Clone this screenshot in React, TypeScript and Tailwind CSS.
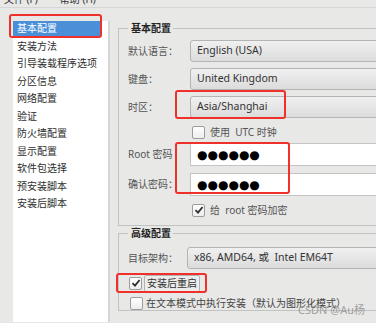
import React from "react";

const menuItems = [
  "基本配置",
  "安装方法",
  "引导装载程序选项",
  "分区信息",
  "网络配置",
  "验证",
  "防火墙配置",
  "显示配置",
  "软件包选择",
  "预安装脚本",
  "安装后脚本",
];

const Check: React.FC<{ checked?: boolean }> = ({ checked }) => (
  <span className="flex h-[13px] w-[13px] shrink-0 items-center justify-center rounded-[2px] border border-[#9c9c9c] bg-gradient-to-b from-white to-[#ededed]">
    {checked && (
      <svg width="10" height="10" viewBox="0 0 10 10">
        <path d="M1.5 5.2 L4 7.6 L8.6 2" fill="none" stroke="#2e2e2e" strokeWidth="1.8" />
      </svg>
    )}
  </span>
);

const Combo: React.FC<{ value: string; className?: string }> = ({ value, className }) => (
  <div
    className={`flex h-[22px] w-[220px] items-center rounded-[3px] border border-[#b4b4b4] bg-gradient-to-b from-[#f0f0f0] to-[#dcdcdc] pl-[6px] text-[10.5px] text-[#333] ${className ?? ""}`}
  >
    {value}
  </div>
);

const Field: React.FC<{ label: string; children: React.ReactNode; w?: string }> = ({ label, children, w }) => (
  <div className="flex items-center">
    <span className={`${w ?? "w-[62px]"} shrink-0 text-[10px] text-[#555]`}>{label}</span>
    {children}
  </div>
);

const Password: React.FC = () => (
  <div className="flex h-[23px] w-[220px] items-center border border-[#c4c4c4] bg-white pl-[6px]">
    <span className="text-[12px] leading-none tracking-[0px] text-black [font-family:'DejaVu_Sans',sans-serif]">
      ●●●●●●
    </span>
  </div>
);

export default function App() {
  return (
    <div className="relative h-[323px] w-[376px] overflow-hidden bg-[#e8e8e7] [font-family:'Noto_Sans','Noto_Sans_CJK_SC',sans-serif]">
      {/* menu bar, cut off by the crop */}
      <div className="h-[8px] overflow-hidden border-b border-[#d6d6d6]">
        <div className="-mt-[8px] flex gap-[22px] pl-[4px] text-[10px] leading-[14px] text-[#333]">
          <span>文件 (F)</span>
          <span>帮助 (H)</span>
        </div>
      </div>

      <div className="flex pt-[13px]">
        {/* left nav list */}
        <div className="ml-[13px] h-[301px] w-[97px] shrink-0 border-r-2 border-[#d4d4d4] bg-white">
          {menuItems.map((item, i) => (
            <div key={item} className="h-[17.5px]">
              <div
                className={`flex h-[15px] items-center pl-[4px] text-[10px] ${
                  i === 0 ? "w-[87px] bg-[#4a90d9] text-white" : "text-[#2e2e2e]"
                }`}
              >
                {item}
              </div>
            </div>
          ))}
        </div>

        {/* right settings */}
        <div className="ml-[8px] w-[280px] shrink-0">
          <fieldset className="border border-[#c2c2c2] pb-[8px] pl-[9px]">
            <legend className="h-[14px] pl-[3px] pr-[2px] text-[10px] font-bold leading-[14px] text-[#222]">
              基本配置
            </legend>
            <div className="mt-[5px] flex flex-col gap-[6px]">
              <Field label="默认语言：">
                <Combo value="English (USA)" />
              </Field>
              <Field label="键盘：">
                <Combo value="United Kingdom" />
              </Field>
              <Field label="时区：">
                <Combo value="Asia/Shanghai" />
              </Field>
            </div>
            <div className="mt-[7px] flex h-[14px] items-center gap-[5px] pl-[64px] text-[10px] leading-[14px] text-[#555]">
              <Check />
              <span>使用 &nbsp;UTC 时钟</span>
            </div>
            <div className="mt-[4px] flex flex-col gap-[7px]">
              <Field label="Root 密码">
                <Password />
              </Field>
              <Field label="确认密码：">
                <Password />
              </Field>
            </div>
            <div className="mt-[7px] flex h-[14px] items-center gap-[5px] pl-[64px] text-[10px] leading-[14px] text-[#555]">
              <Check checked />
              <span>给 &nbsp;root 密码加密</span>
            </div>
          </fieldset>

          <fieldset className="border border-[#c2c2c2] pl-[9px]">
            <legend className="h-[14px] pl-[3px] pr-[2px] text-[10px] font-bold leading-[14px] text-[#222]">
              高级配置
            </legend>
            <div className="mt-[7px]">
              <Field label="目标架构：" w="w-[59px]">
                <Combo value="x86, AMD64, 或 &nbsp;Intel EM64T" className="h-[21px]" />
              </Field>
            </div>
            <div className="mt-[5px] flex h-[18px] items-center gap-[2px] pl-[1px] text-[10px] leading-[14px] text-[#333]">
              <Check checked />
              <span className="flex h-[17px] items-center rounded-[2px] border border-[#b4b4b4] bg-[#ececec] px-[2px]">
                安装后重启
              </span>
            </div>
            <div className="mt-[4px] flex h-[14px] items-center gap-[3px] pl-[2px] text-[10px] leading-[14px] text-[#444]">
              <Check />
              <span>在文本模式中执行安装（默认为图形化模式）</span>
            </div>
          </fieldset>
        </div>
      </div>

      {/* red annotation boxes */}
      <div className="absolute left-[9px] top-[14px] h-[24px] w-[93px] rounded-[3px] border-2 border-[#f0302a]" />
      <div className="absolute left-[175px] top-[90px] h-[29px] w-[111px] rounded-[3px] border-2 border-[#f0302a]" />
      <div className="absolute left-[175px] top-[142px] h-[52px] w-[115px] rounded-[3px] border-2 border-[#f0302a]" />
      <div className="absolute left-[116px] top-[273px] h-[20px] w-[91px] rounded-[3px] border-2 border-[#f0302a]" />

      {/* watermark */}
      <div className="absolute left-[298px] top-[302px] text-[11px] text-[#8c8c8c]/80">CSDN @Au杨</div>
    </div>
  );
}
